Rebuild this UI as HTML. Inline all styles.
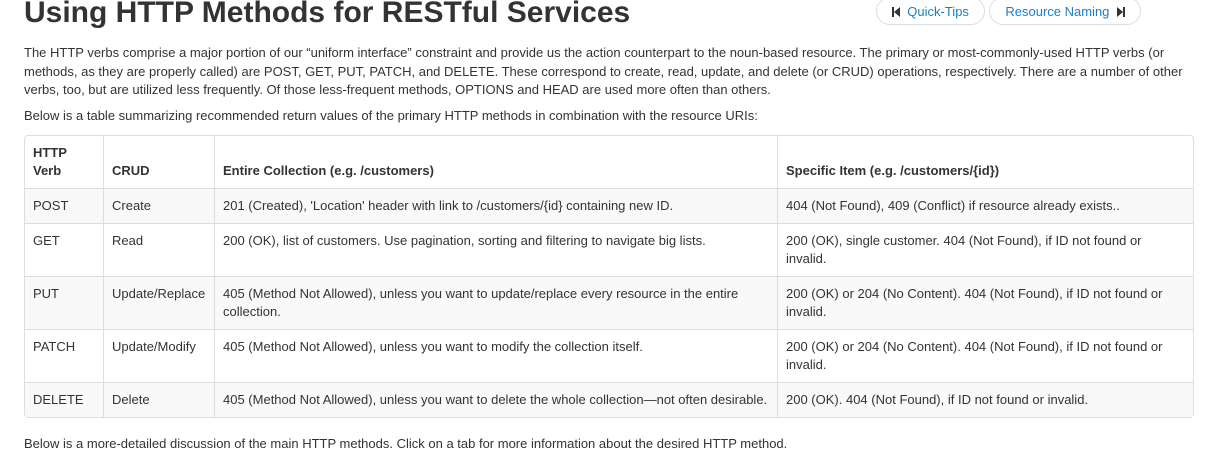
<!DOCTYPE html>
<html><head><meta charset="utf-8"><style>
body{margin:0;background:#fff;font-family:"Liberation Sans",Arial,sans-serif;color:#333;font-size:13px;width:1210px;height:457px;overflow:hidden;position:relative}
h1{position:absolute;left:24px;top:-5px;margin:0;font-size:30px;font-weight:bold;color:#333;white-space:nowrap;line-height:36px}
.btn{position:absolute;top:-3px;height:28px;border:1px solid #ddd;border-radius:15px;color:#1a7fc8;font-size:13px;line-height:28px;box-sizing:border-box;text-align:center;white-space:nowrap}
.btn svg{vertical-align:-1px}
.p{position:absolute;left:24px;line-height:18.5px;white-space:nowrap}
table{position:absolute;left:24px;top:135px;width:1170px;border-collapse:separate;border-spacing:0;border:1px solid #ddd;border-radius:4px;font-size:13px;line-height:18px}
td,th{border-left:1px solid #ddd;border-top:1px solid #ddd;padding:8px;text-align:left;vertical-align:top}
th{font-weight:bold;vertical-align:bottom;border-top:0}
tr td:first-child,tr th:first-child{border-left:0}
tr.s td{background:#f9f9f9}
</style></head><body>
<h1>Using HTTP Methods for RESTful Services</h1>
<div class="btn" style="left:876px;width:109px"><svg width="8" height="10" viewBox="0 0 8 10"><rect x="0" y="0" width="2" height="10" fill="#333"/><path d="M8 0 L2 5 L8 10Z" fill="#333"/></svg>&nbsp; Quick-Tips</div>
<div class="btn" style="left:989px;width:152px">Resource Naming &nbsp;<svg width="8" height="10" viewBox="0 0 8 10"><path d="M0 0 L6 5 L0 10Z" fill="#333"/><rect x="6" y="0" width="2" height="10" fill="#333"/></svg></div>
<div class="p" style="top:44px">The HTTP verbs comprise a major portion of our “uniform interface” constraint and provide us the action counterpart to the noun-based resource. The primary or most-commonly-used HTTP verbs (or<br>methods, as they are properly called) are POST, GET, PUT, PATCH, and DELETE. These correspond to create, read, update, and delete (or CRUD) operations, respectively. There are a number of other<br>verbs, too, but are utilized less frequently. Of those less-frequent methods, OPTIONS and HEAD are used more often than others.</div>
<div class="p" style="top:107px">Below is a table summarizing recommended return values of the primary HTTP methods in combination with the resource URIs:</div>
<table>
<tr style="height:52px"><th style="width:62px">HTTP<br>Verb</th><th style="width:94px">CRUD</th><th style="width:546px">Entire Collection (e.g. /customers)</th><th>Specific Item (e.g. /customers/{id})</th></tr>
<tr class="s"><td>POST</td><td>Create</td><td>201 (Created), 'Location' header with link to /customers/{id} containing new ID.</td><td>404 (Not Found), 409 (Conflict) if resource already exists..</td></tr>
<tr><td>GET</td><td>Read</td><td>200 (OK), list of customers. Use pagination, sorting and filtering to navigate big lists.</td><td>200 (OK), single customer. 404 (Not Found), if ID not found or<br>invalid.</td></tr>
<tr class="s"><td>PUT</td><td>Update/Replace</td><td>405 (Method Not Allowed), unless you want to update/replace every resource in the entire<br>collection.</td><td>200 (OK) or 204 (No Content). 404 (Not Found), if ID not found or<br>invalid.</td></tr>
<tr><td>PATCH</td><td>Update/Modify</td><td>405 (Method Not Allowed), unless you want to modify the collection itself.</td><td>200 (OK) or 204 (No Content). 404 (Not Found), if ID not found or<br>invalid.</td></tr>
<tr class="s"><td>DELETE</td><td>Delete</td><td>405 (Method Not Allowed), unless you want to delete the whole collection—not often desirable.</td><td>200 (OK). 404 (Not Found), if ID not found or invalid.</td></tr>
</table>
<div class="p" style="top:435px">Below is a more-detailed discussion of the main HTTP methods. Click on a tab for more information about the desired HTTP method.</div>
</body></html>
